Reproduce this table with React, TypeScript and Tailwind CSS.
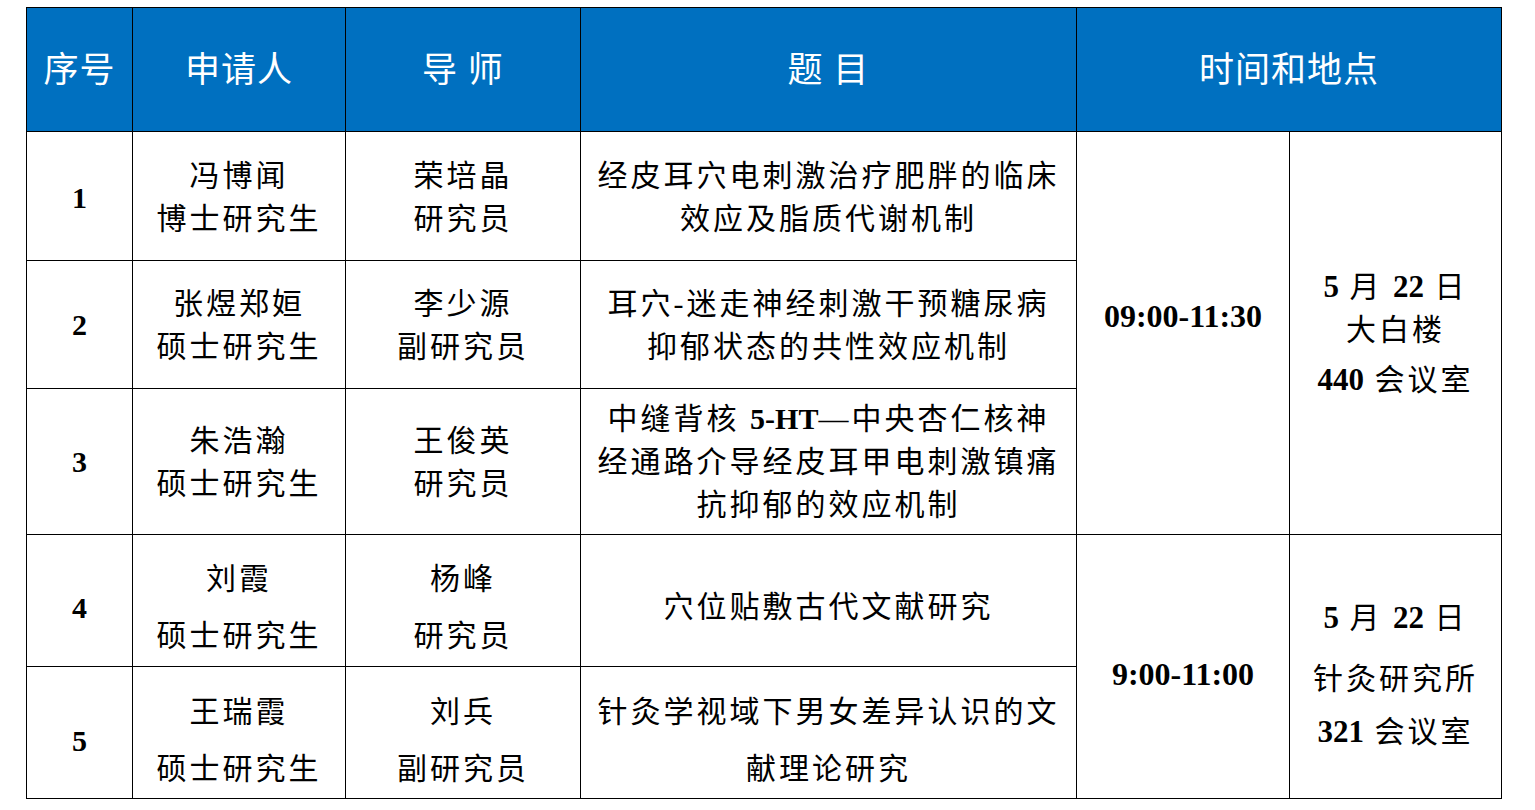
const cjk = "font-['Liberation_Serif','Noto_Sans_CJK_SC',serif]";

const Num = ({ children }: { children: React.ReactNode }) => (
  <span className="font-bold tracking-normal text-[31px]">{children}</span>
);

const Cell = ({ className = "", children }: { className?: string; children?: React.ReactNode }) => (
  <div className={`bg-white flex flex-col items-center justify-center text-center text-black ${className}`}>
    {children}
  </div>
);

const App = () => {
  const head = ["序号", "申请人", "导 师", "题 目", "时间和地点"];

  return (
    <div className={`min-h-screen bg-white pt-[7px] pl-[26px] ${cjk}`}>
      <div className="grid w-fit gap-px bg-black p-px grid-cols-[105px_212px_234px_495px_212px_211px] grid-rows-[123px_128px_127px_145px_131px_131px] text-[30px] tracking-[3px]">
        {/* Header */}
        {head.map((h, i) => (
          <div
            key={i}
            className={`bg-[#0070c0] text-white flex items-center justify-center text-[35px] tracking-[1px] whitespace-pre pt-[4px] ${i === 4 ? "col-span-2" : ""}`}
          >
            {h}
          </div>
        ))}

        {/* Row 1 */}
        <Cell className="text-[30px] font-bold tracking-normal"><span className="pt-[2px]">1</span></Cell>
        <Cell className="leading-[43px] pt-[2px]"><span>冯博闻</span><span>博士研究生</span></Cell>
        <Cell className="leading-[43px] pt-[2px]"><span>荣培晶</span><span>研究员</span></Cell>
        <Cell className="leading-[43px] pt-[2px]"><span>经皮耳穴电刺激治疗肥胖的临床</span><span>效应及脂质代谢机制</span></Cell>
        <Cell className="row-span-3 pb-[34px]"><span className="font-bold text-[32px] tracking-normal">09:00-11:30</span></Cell>
        <Cell className="row-span-3 leading-[43px]">
          <span><Num>5</Num> 月 <Num>22</Num> 日</span>
          <span>大白楼</span>
          <span className="mt-[7px]"><Num>440</Num> 会议室</span>
        </Cell>

        {/* Row 2 */}
        <Cell className="text-[30px] font-bold tracking-normal">2</Cell>
        <Cell className="leading-[43px]"><span>张煜郑姮</span><span>硕士研究生</span></Cell>
        <Cell className="leading-[43px]"><span>李少源</span><span>副研究员</span></Cell>
        <Cell className="leading-[43px]"><span>耳穴-迷走神经刺激干预糖尿病</span><span>抑郁状态的共性效应机制</span></Cell>

        {/* Row 3 */}
        <Cell className="text-[30px] font-bold tracking-normal">3</Cell>
        <Cell className="leading-[43px]"><span>朱浩瀚</span><span>硕士研究生</span></Cell>
        <Cell className="leading-[43px]"><span>王俊英</span><span>研究员</span></Cell>
        <Cell className="leading-[43px]">
          <span>中缝背核 <span className="font-bold tracking-normal">5-HT</span>—中央杏仁核神</span>
          <span>经通路介导经皮耳甲电刺激镇痛</span>
          <span>抗抑郁的效应机制</span>
        </Cell>

        {/* Row 4 */}
        <Cell className="text-[30px] font-bold tracking-normal pt-[14px]">4</Cell>
        <Cell className="leading-[57px] pt-[12px]"><span>刘霞</span><span>硕士研究生</span></Cell>
        <Cell className="leading-[57px] pt-[12px]"><span>杨峰</span><span>研究员</span></Cell>
        <Cell className="leading-[57px] pt-[12px]"><span>穴位贴敷古代文献研究</span></Cell>
        <Cell className="row-span-2 pt-[14px]"><span className="font-bold text-[32px] tracking-normal">9:00-11:00</span></Cell>
        <Cell className="row-span-2 pt-[16px] leading-[53px]">
          <span><Num>5</Num> 月 <Num>22</Num> 日</span>
          <span className="mt-[8px]">针灸研究所</span>
          <span><Num>321</Num> 会议室</span>
        </Cell>

        {/* Row 5 */}
        <Cell className="text-[30px] font-bold tracking-normal pt-[16px]">5</Cell>
        <Cell className="leading-[57px] pt-[14px]"><span>王瑞霞</span><span>硕士研究生</span></Cell>
        <Cell className="leading-[57px] pt-[14px]"><span>刘兵</span><span>副研究员</span></Cell>
        <Cell className="leading-[57px] pt-[14px]"><span>针灸学视域下男女差异认识的文</span><span>献理论研究</span></Cell>
      </div>
    </div>
  );
};

export default App;
